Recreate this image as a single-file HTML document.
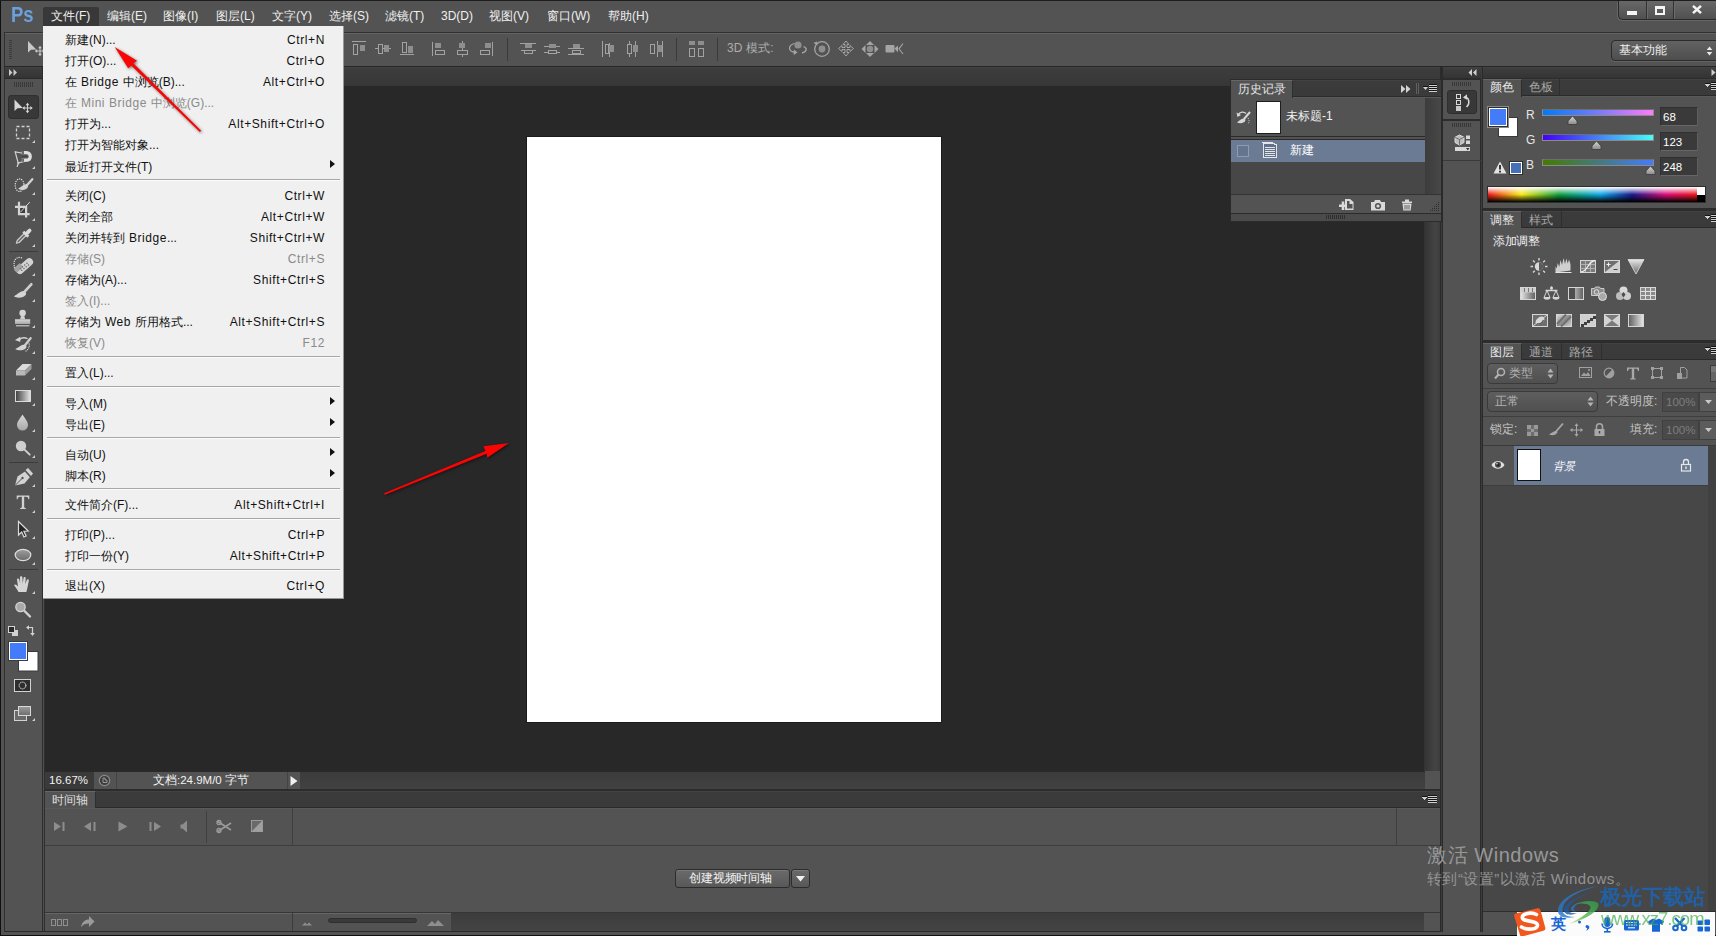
<!DOCTYPE html>
<html><head><meta charset="utf-8">
<style>
*{box-sizing:border-box;margin:0;padding:0}
html,body{width:1716px;height:936px;overflow:hidden;background:#535353;font-family:"Liberation Sans",sans-serif;font-size:12px;color:#e6e6e6}
.a{position:absolute}
.t{position:absolute;white-space:nowrap;line-height:14px}
svg{position:absolute;overflow:visible}
/* menu */
#menu{left:43px;top:26px;width:301px;height:573px;background:#f0f0f0;border-right:1px solid #979797;border-bottom:1px solid #979797;color:#000;font-size:12px}
#menu .i{position:absolute;left:22px;white-space:nowrap;line-height:14px;color:#111;margin-top:1px}
#menu .l{letter-spacing:.55px}
#menu .k{position:absolute;right:18px;white-space:nowrap;line-height:14px;color:#111;text-align:right;margin-top:1px;letter-spacing:.6px}
#menu .d{color:#8a8a8a}
#menu .s{position:absolute;left:4px;right:3px;height:2px;border-top:1px solid #a7a7a7;border-bottom:1px solid #fbfbfb}
#menu .r{position:absolute;left:287px;width:0;height:0;border-left:5px solid #111;border-top:4px solid transparent;border-bottom:4px solid transparent}
.tab{position:absolute;white-space:nowrap;line-height:14px;font-size:12px}
</style></head><body>

<!-- ===== window frame / base ===== -->
<div class="a" style="left:0;top:0;width:1716px;height:936px;background:#535353"></div>

<!-- canvas area -->
<div class="a" id="strip" style="left:44px;top:67px;width:1397px;height:19px;background:linear-gradient(#484848 0,#3d3d3d 1px,#373737 100%)"></div>
<div class="a" id="canvas" style="left:44px;top:86px;width:1397px;height:685px;background:#282828"></div>
<div class="a" id="vscroll" style="left:1424px;top:86px;width:16px;height:685px;background:linear-gradient(90deg,#333,#444 70%,#3c3c3c)"></div>
<div class="a" id="doc" style="left:527px;top:137px;width:414px;height:585px;background:#fff;box-shadow:0 0 0 1px #1b1b1b"></div>

<!-- SECTION: menubar -->
<div class="a" style="left:0;top:0;width:1px;height:936px;background:#101010"></div>
<div class="t" style="left:11px;top:3px;font-size:22px;line-height:24px;font-weight:bold;color:#6aa0db;transform:scaleX(.84);transform-origin:0 0">Ps</div>
<div class="a" style="left:43px;top:7px;width:56px;height:19px;background:#383838;border-radius:2px 2px 0 0"></div>
<div class="t" style="left:51px;top:9px;color:#f0f0f0">文件(F)</div>
<div class="t" style="left:107px;top:9px;color:#f0f0f0">编辑(E)</div>
<div class="t" style="left:163px;top:9px;color:#f0f0f0">图像(I)</div>
<div class="t" style="left:216px;top:9px;color:#f0f0f0">图层(L)</div>
<div class="t" style="left:272px;top:9px;color:#f0f0f0">文字(Y)</div>
<div class="t" style="left:329px;top:9px;color:#f0f0f0">选择(S)</div>
<div class="t" style="left:385px;top:9px;color:#f0f0f0">滤镜(T)</div>
<div class="t" style="left:441px;top:9px;color:#f0f0f0">3D(D)</div>
<div class="t" style="left:489px;top:9px;color:#f0f0f0">视图(V)</div>
<div class="t" style="left:547px;top:9px;color:#f0f0f0">窗口(W)</div>
<div class="t" style="left:608px;top:9px;color:#f0f0f0">帮助(H)</div>
<div class="a" style="left:1618px;top:1px;width:98px;height:19px;background:linear-gradient(#686868,#505050);border:1px solid #2a2a2a;border-top:0;border-right:0;border-radius:0 0 0 5px;box-shadow:-1px 1px 0 #666"></div>
<div class="a" style="left:1646px;top:1px;width:1px;height:18px;background:#323232"></div><div class="a" style="left:1647px;top:1px;width:1px;height:18px;background:#6a6a6a"></div>
<div class="a" style="left:1673px;top:1px;width:1px;height:18px;background:#323232"></div><div class="a" style="left:1674px;top:1px;width:1px;height:18px;background:#6a6a6a"></div>
<div class="a" style="left:1627px;top:11px;width:10px;height:4px;background:#f4f4f4"></div>
<div class="a" style="left:1655px;top:6px;width:10px;height:9px;border:2px solid #f4f4f4;border-top-width:3px"></div>
<svg style="left:1692px;top:5px" width="10" height="9" viewBox="0 0 10 9"><path d="M1 0.800 L9 8.200 M9 0.800 L1 8.200" stroke="#f4f4f4" stroke-width="2.500" fill="none"/></svg>
<div class="a" style="left:0;top:0;width:1716px;height:1px;background:#1e1e1e"></div>
<!-- SECTION: optionsbar -->
<div class="a" style="left:4px;top:32px;width:1712px;height:1px;background:#303030"></div>
<div class="a" style="left:4px;top:33px;width:1712px;height:1px;background:#636363"></div>
<div class="a" style="left:4px;top:66px;width:1712px;height:1px;background:#262626"></div>
<div class="a" style="left:4px;top:32px;width:1px;height:35px;background:#303030"></div>
<svg style="left:0;top:0" width="1716" height="67" viewBox="0 0 1716 67" fill="none" stroke="#a2a2a2" stroke-width="1" shape-rendering="crispEdges">
 <g fill="#8e8e8e" stroke="none">
  <rect x="360" y="45" width="5" height="6"/><rect x="384" y="45" width="5" height="7"/><rect x="408" y="46" width="5" height="7"/>
  <rect x="435" y="43" width="6" height="5"/><rect x="459" y="43" width="6" height="5"/><rect x="485" y="43" width="6" height="5"/>
  <rect x="525" y="44" width="7" height="4"/><rect x="549" y="44" width="7" height="4"/><rect x="573" y="44" width="7" height="4"/>
  <rect x="609" y="45" width="5" height="7"/><rect x="633" y="45" width="5" height="7"/><rect x="657" y="45" width="5" height="7"/>
  <rect x="689" y="41" width="6" height="4"/><rect x="698" y="41" width="6" height="4"/>
 </g>
 <!-- align top/vcenter/bottom -->
 <path d="M352 41.5H366 M353.5 44.5h4v10h-4z"/>
 <path d="M375 48.5h3 M383 48.5h2 M389 48.5h2 M378.5 44.5h4v9h-4z"/>
 <path d="M400 54.5H414 M402.5 42.5h4v10h-4z"/>
 <!-- align left/hcenter/right -->
 <path d="M432.5 42V56 M435.5 50.5h9v4h-9z"/>
 <path d="M462.5 41v2 M462.5 48v3 M462.5 55v2 M457.5 50.5h10v4h-10z"/>
 <path d="M492.5 42V56 M480.5 50.5h9v4h-9z"/>
 <path d="M507.5 38V61" stroke="#3a3a3a"/>
 <!-- distribute -->
 <path d="M520 43.5H536 M524.5 50.5h8v3h-8z M521 50.5h3 M533 50.5h3"/>
 <path d="M544 46.5h5 M556 46.5h4 M548.5 50.5h8v3h-8z M544 52.5h4 M557 52.5h3"/>
 <path d="M568 48.5H584 M572.5 50.5h8v3h-8z M568 54.5H584"/>
 <path d="M602.5 41V57 M605.5 44.5h3v9h-3z M609.5 43v2 M609.5 52v5"/>
 <path d="M629.5 41v3 M629.5 54v3 M627.5 44.5h4v9h-4z M635.5 41v4 M635.5 52v5"/>
 <path d="M650.5 44.5h4v9h-4z M657.5 41v4 M657.5 52v5 M662.5 41V57"/>
 <path d="M676.5 38V61" stroke="#3a3a3a"/>
 <path d="M689.5 48.5h5v8h-5z M698.5 48.5h5v8h-5z"/>
 <path d="M717.5 38V61" stroke="#3a3a3a"/>
</svg>
<div class="t" style="left:727px;top:41px;color:#adadad;letter-spacing:0.1px">3D 模式:</div>
<svg style="left:786px;top:38px" width="120" height="22" viewBox="786 38 120 22" fill="none" stroke="#a4a4a4" stroke-width="1.3">
 <!-- orbit -->
 <circle cx="798" cy="45" r="3.6" fill="#8e8e8e" stroke="none"/>
 <path d="M794.5 43.5c-7 2-6.500 8.500 1 8.700 M803.500 46.500c4 1.500 3.500 5.500-1.500 6.500" />
 <path d="M794 49.500l3.500 3-4 2.500z" fill="#a4a4a4" stroke="none"/>
 <!-- roll -->
 <circle cx="822" cy="49" r="7.300"/><circle cx="822" cy="49" r="3.400" fill="#8e8e8e" stroke="none"/>
 <path d="M813.500 43l3.500-1.500 0.500 4z" fill="#a4a4a4" stroke="none"/>
 <!-- pan -->
 <path d="M846 41l3 3.500h-2v3h3v-2l3.500 3-3.500 3v-2h-3v3h2l-3 3.500-3-3.500h2v-3h-3v2l-3.500-3 3.500-3v2h3v-3h-2z" stroke-width="1"/>
 <!-- slide -->
 <path d="M870 41l4 4h-8z M870 57l-4-4h8z M861.500 49l4-4v8z M878.500 49l-4-4v8z" fill="#a4a4a4" stroke="none"/>
 <circle cx="870" cy="49" r="3.200" fill="#8e8e8e" stroke="none"/>
 <!-- camera -->
 <rect x="885.500" y="45" width="9" height="7.500" rx="1" fill="#a4a4a4" stroke="none"/>
 <path d="M894.500 48.500l3.500-3v7z" fill="#a4a4a4" stroke="none"/>
 <path d="M903 43.500l-4 5.300 4 5.200" stroke-width="1.100"/>
</svg>
<!-- workspace switcher -->
<div class="a" style="left:1611px;top:40px;width:110px;height:21px;border:1px solid #2c2c2c;border-radius:4px;background:linear-gradient(#626262,#4e4e4e);box-shadow:0 1px 0 #646464"></div>
<div class="t" style="left:1619px;top:43px;color:#f0f0f0">基本功能</div>
<svg style="left:1706px;top:46px" width="7" height="10" viewBox="0 0 7 10"><path d="M3.500 0.500L6.300 4H0.700z M3.500 9.500L6.300 6H0.700z" fill="#eaeaea"/></svg>
<!-- left part of option bar (mostly hidden) -->
<svg style="left:8px;top:39px" width="36" height="22" viewBox="8 38 36 22" shape-rendering="crispEdges">
 <path d="M9 39.500h3M9 41.500h3M9 43.500h3M9 45.500h3M9 47.500h3M9 49.500h3M9 51.500h3M9 53.500h3M9 55.500h3M9 57.500h3" stroke="#3c3c3c"/>
</svg>
<svg style="left:26px;top:40px" width="18" height="16" viewBox="26 40 18 16"><path d="M28 41V52.500l3-2.700 5.300-.3z" fill="#c8c8c8"/><path d="M40 47.500v7M36.500 51h7" stroke="#c8c8c8" stroke-width="1.100"/><path d="M40 45.800l-1.900 2.400h3.800zM40 56.200l-1.900-2.400h3.800zM34.800 51l2.400-1.900v3.800zM45.200 51l-2.400-1.900v3.800z" fill="#c8c8c8"/></svg>

<!-- SECTION: toolbar -->
<div class="a" style="left:4px;top:67px;width:39px;height:12px;background:linear-gradient(#474747 0,#3e3e3e 1px,#343434 100%);border-bottom:1px solid #2a2a2a"></div>
<svg style="left:9px;top:69px" width="9" height="7" viewBox="0 0 9 7"><path d="M0 0l3.500 3.500L0 7zM4.500 0L8 3.500 4.500 7z" fill="#c9c9c9"/></svg>
<div class="a" style="left:4px;top:67px;width:1px;height:865px;background:#303030"></div>
<div class="a" style="left:42px;top:67px;width:1px;height:865px;background:#2e2e2e"></div><div class="a" style="left:43px;top:67px;width:1px;height:865px;background:#505050"></div><div class="a" style="left:44px;top:67px;width:1px;height:865px;background:#2e2e2e"></div>
<svg style="left:14px;top:82px" width="20" height="5" viewBox="0 0 20 5" shape-rendering="crispEdges"><path d="M0.500 0v5M2.500 0v5M4.500 0v5M6.500 0v5M8.500 0v5M10.500 0v5M12.500 0v5M14.500 0v5M16.500 0v5M18.500 0v5" stroke="#393939"/></svg>
<div class="a" style="left:8px;top:95px;width:31px;height:24px;background:#383838;border-radius:3px;border:1px solid #2f2f2f"></div>
<div class="a" style="left:9px;top:251px;width:29px;height:1px;background:#3c3c3c"></div>
<div class="a" style="left:9px;top:462px;width:29px;height:1px;background:#3c3c3c"></div>
<div class="a" style="left:9px;top:569px;width:29px;height:1px;background:#3c3c3c"></div>
<svg id="tools" style="left:0;top:90px" width="44" height="640" viewBox="0 90 44 640" fill="none" stroke="#d2d2d2" stroke-width="1.400" stroke-linejoin="round" stroke-linecap="round">
 <!-- corner triangles -->
 <g fill="#cfcfcf" stroke="none">
  <path d="M35 140v3h-3zM35 166v3h-3zM35 192v3h-3zM35 218v3h-3zM35 244v3h-3zM35 273v3h-3zM35 299v3h-3zM35 325v3h-3zM35 351v3h-3zM35 377v3h-3zM35 403v3h-3zM35 429v3h-3zM35 455v3h-3zM35 484v3h-3zM35 510v3h-3zM35 536v3h-3zM35 562v3h-3zM35 591v3h-3zM35 718v3h-3z"/>
 </g>
 <!-- move -->
 <path d="M14.500 99.500V111l3-2.700 5.300-.3z" fill="#d6d6d6" stroke="none"/>
 <path d="M27.500 104.500v7M24 108h7" stroke-width="1.100"/><path d="M27.500 102.800l-1.900 2.400h3.800zM27.500 113.200l-1.900-2.400h3.800zM22.300 108l2.400-1.900v3.800zM32.700 108l-2.400-1.900v3.800z" fill="#d6d6d6" stroke="none"/>
 <!-- marquee -->
 <rect x="16.500" y="126.500" width="13" height="12" stroke-dasharray="3 2" stroke-width="1.300" stroke-linecap="butt"/>
 <!-- lasso -->
 <path d="M15.200 151.800l3 11.200 12-3.200" stroke-width="1.200"/><path d="M15.200 151.800l6.500 1.200" stroke-width="1.200"/><path d="M18.500 163l-1.300 3.500" stroke-width="1.200"/><circle cx="18.300" cy="163" r="1.100" fill="#d2d2d2" stroke="none"/>
 <path d="M21.800 152.600h4.700a3.800 3.800 0 010 7.600h-4.700" stroke="#dedede" stroke-width="3.200" stroke-linecap="butt"/>
 <path d="M22 152.600h2M22 160.200h2" stroke="#6a6a6a" stroke-width="3.200" stroke-linecap="butt"/>
 <path d="M22.500 156.400h4" stroke="#444" stroke-width="1.300"/>
 <!-- quick select -->
 <ellipse cx="19.600" cy="185.200" rx="4.400" ry="6.300" stroke="#e4e4e4" stroke-dasharray="0.100 2.150" stroke-width="1.350"/>
 <path d="M32.300 179.200l-5.800 6.500" stroke-width="2.400" stroke="#d0d0d0"/><path d="M27 184.300c-2.500-.8-4.300 1.500-8.800 4.200 1.800 2 7 2.300 9.300-.7 1-1.300.8-2.600-.5-3.500z" fill="#d4d4d4" stroke="none"/>
 <!-- crop -->
 <rect x="20" y="207.800" width="5" height="5.200" fill="#3c3c3c" stroke="none"/>
 <path d="M19 201.800v12.300h10.600M15 206.800h11.100v10.700" stroke="#d4d4d4" stroke-width="2.200" stroke-linecap="butt" stroke-linejoin="miter"/><path d="M29.600 202.300l-9 9.700" stroke-width="1"/>
 <!-- eyedropper -->
 <path d="M16.300 243.300l.9-2.800 7.800-7.800 2 2-7.800 7.800z" stroke-width="1.100" fill="#6a6a6a"/>
 <path d="M27.300 232.800l2.300-2.300" stroke="#dadada" stroke-width="3.800" stroke-linecap="round"/>
 <path d="M23.300 231.700l5 5" stroke="#dadada" stroke-width="2.700" stroke-linecap="butt"/>
 <!-- heal -->
 <path d="M21.500 257.800c-6.500-1.800-9.500 4.500-6 13" stroke="#e4e4e4" stroke-dasharray="0.100 2.100" stroke-width="1.300"/>
 <rect x="14.500" y="262.300" width="20" height="7.600" rx="3.600" transform="rotate(-41 24.500 266)" fill="#d2d2d2" stroke="none"/>
 <path d="M17.300 272.300l6-5.200-3.500-4.200-4.500 4c-2 2.500.2 5.400 2 5.400z" fill="#a2a2a2" stroke="none"/>
 <g fill="#5e5e5e" stroke="none"><circle cx="22.500" cy="266.800" r=".7"/><circle cx="24.700" cy="265" r=".7"/><circle cx="24" cy="268.500" r=".7"/><circle cx="26.200" cy="266.700" r=".7"/><circle cx="27" cy="263.300" r=".7"/><circle cx="28.500" cy="265" r=".7"/><circle cx="20.300" cy="268.600" r=".7"/><circle cx="21.800" cy="270.300" r=".7"/></g>
 <!-- brush -->
 <path d="M31.300 284.300l-7.600 8.400" stroke="#cdcdcd" stroke-width="2.700"/><path d="M24.300 291.700c-3-1.500-5.300 1.600-10.300 4.600 3 2.400 9.800 1.800 11.800-1.600.8-1.300.3-2.200-1.500-3z" fill="#d4d4d4" stroke="none"/>
 <!-- stamp -->
 <circle cx="22.600" cy="313" r="3.250" fill="#d6d6d6" stroke="none"/><path d="M21.100 315.300h3l1 4h-5z" fill="#d0d0d0" stroke="none"/><path d="M15 319.200h15.200v4.700h-15.200z" fill="url(#gd)" stroke="none"/><path d="M16 325.800h13.400" stroke-width="1.100" stroke-linecap="butt"/>
 <!-- history brush -->
 <path d="M30.600 338.200l-6 7.600" stroke="#cdcdcd" stroke-width="2.400"/><path d="M25 345c-2.500-1.300-4.500 1-9.800 4 2.800 2.200 9 1.700 11-1.300.8-1.200.3-2-1.200-2.700z" fill="#d4d4d4" stroke="none"/>
 <path d="M19.500 339.500c2-2 5.500-2.300 7.500-1" stroke-width="1.400"/><path d="M15 340l5.300-3.300v5.300z" fill="#d6d6d6" stroke="none"/><path d="M26 351c2.500-1.500 3.800-4.500 3-7.500" stroke="#e4e4e4" stroke-dasharray="0.100 1.900" stroke-width="1.200"/>
 <!-- eraser -->
 <path d="M16 370.500l6.500-6.500h9l-6.500 6.500z" fill="#dcdcdc" stroke="none"/><path d="M16 370.500h9v5h-9z" fill="#b9b9b9" stroke="none"/><path d="M25 370.500l6.500-6.500v5l-6.500 6.500z" fill="#9d9d9d" stroke="none"/>
 <!-- gradient -->
 <defs><linearGradient id="gg" x1="0" x2="1"><stop offset="0" stop-color="#3e3e3e"/><stop offset="1" stop-color="#e6e6e6"/></linearGradient>
 <linearGradient id="gd" x1="0" y1="0" x2="0" y2="1"><stop offset="0" stop-color="#d8d8d8"/><stop offset="1" stop-color="#a8a8a8"/></linearGradient></defs>
 <rect x="15.500" y="390.500" width="15" height="11" fill="url(#gg)" stroke="#dadada" stroke-width="1" stroke-linejoin="miter"/>
 <!-- blur -->
 <path d="M22.500 414.500c2.500 4 5.500 7 5.500 10.500a5.500 5.500 0 01-11 0c0-3.500 3-6.500 5.500-10.500z" fill="url(#gd)" stroke="none"/>
 <!-- dodge -->
 <circle cx="21" cy="446" r="5.200" fill="#cfcfcf" stroke="none"/><path d="M24.800 449.800l4.900 4.900" stroke-width="1.900"/>
 <!-- pen -->
 <path d="M15 485.500l2.500-9 7.500-5 5 5.500-5.500 6.500z" fill="#d2d2d2" stroke="none"/><path d="M15 485.500l7-7" stroke="#555" stroke-width="1"/><circle cx="22.500" cy="478" r="1.200" fill="#555" stroke="none"/>
 <path d="M25.500 470l5.500 6 2-2.500-5-5.500z" fill="#d2d2d2" stroke="none"/><path d="M24.800 471l5.600 6" stroke="#555" stroke-width=".9"/>
 <!-- T -->
 <path transform="translate(23 495.600) scale(.9) translate(-23 -496)" d="M16 496h14v4h-1c-.3-2-1-2.800-3-2.800h-1.700v11c0 1.300.5 1.700 2 1.800v1h-6.600v-1c1.500-.1 2-.5 2-1.800v-11H20c-2 0-2.700.8-3 2.800h-1z" fill="#d2d2d2" stroke="none"/>
 <!-- path select -->
 <path d="M18.500 521.500v13.500l3.200-3 2.200 5 2.200-1-2.200-4.800 4.300-.2z" fill="#242424" stroke="#dcdcdc" stroke-width="1.200" stroke-linejoin="miter"/>
 <!-- ellipse -->
 <linearGradient id="ge" x1="0" y1="0" x2="0" y2="1"><stop offset="0" stop-color="#9c9c9c"/><stop offset="1" stop-color="#6c6c6c"/></linearGradient><ellipse cx="23" cy="555" rx="7.800" ry="5.600" fill="url(#ge)" stroke="#dcdcdc" stroke-width="1.200"/>
 <!-- hand -->
 <path d="M18.500 592c-1-2.500-3-4.500-4.500-7 1-1.200 2.500-.5 4 1.500l-1-7c0-1.500 2-1.500 2.300 0l.8 4-.1-6c0-1.600 2.200-1.600 2.400 0l.3 6 .8-5.500c.3-1.500 2.300-1.200 2.200.3l-.4 5.700 1.500-4c.5-1.400 2.400-.8 2 .7-.8 3.500-1 7-2.500 11.300z" fill="#d6d6d6" stroke="none"/>
 <!-- zoom -->
 <circle cx="20.500" cy="607" r="4.700" fill="#a9a9a9" stroke="#d6d6d6" stroke-width="1.300"/><path d="M24.500 611l5.500 5.500" stroke-width="2.400"/>
 <!-- default colors / swap -->
 <rect x="8.500" y="626.500" width="6" height="6" fill="#2a2a2a" stroke="#d2d2d2" stroke-width="1" stroke-linejoin="miter"/><rect x="12" y="630" width="6" height="6" fill="#d2d2d2" stroke="none"/><rect x="9" y="627" width="5" height="5" fill="#2a2a2a" stroke="none"/>
 <path d="M28 627.500h4.500v6" stroke-width="1.200" stroke-linejoin="miter" stroke-linecap="butt"/><path d="M26 627.500l3-2.300v4.600zM32.500 636l-2.300-3h4.600z" fill="#d2d2d2" stroke="none"/>
 <!-- bg/fg -->
 <rect x="19" y="652" width="19" height="19" fill="#fff" stroke="none"/><rect x="18.500" y="651.500" width="19.500" height="19.500" stroke="#3a3a3a" stroke-width="1" stroke-linejoin="miter"/>
 <rect x="8.500" y="641.500" width="19" height="19" fill="#447bf8" stroke="#3a3a3a" stroke-width="1" stroke-linejoin="miter"/><rect x="9.500" y="642.500" width="17" height="17" stroke="#fff" stroke-width="1" stroke-linejoin="miter"/>
 <!-- quick mask -->
 <rect x="14.500" y="679.500" width="16" height="12" fill="#2e2e2e" stroke="#d2d2d2" stroke-width="1" stroke-linejoin="miter"/><circle cx="22.500" cy="685.500" r="3.400" stroke-dasharray="1 1.200" stroke-width="1"/>
 <!-- screen mode -->
 <rect x="14.500" y="710.500" width="12" height="10" fill="#6a6a6a" stroke="#d2d2d2" stroke-width="1" stroke-linejoin="miter"/><rect x="18.500" y="706.500" width="12" height="9" fill="url(#ge)" stroke="#d8d8d8" stroke-width="1" stroke-linejoin="miter"/>
</svg>
<!-- SECTION: status -->
<div class="a" style="left:44px;top:771px;width:1397px;height:19px;background:linear-gradient(#3b3b3b,#424242)"></div>
<div class="a" style="left:44px;top:771px;width:1381px;height:1px;background:#2a2a2a"></div>
<div class="a" style="left:44px;top:772px;width:49px;height:17px;background:#3a3a3a"></div>
<div class="t" style="left:49px;top:773px;color:#f2f2f2;font-size:11.500px">16.67%</div>
<div class="a" style="left:93px;top:772px;width:207px;height:17px;background:#535353;border-left:1px solid #3a3a3a"></div>
<div class="a" style="left:116px;top:772px;width:1px;height:17px;background:#434343"></div>
<div class="a" style="left:287px;top:772px;width:1px;height:17px;background:#434343"></div>
<svg style="left:98px;top:774px" width="13" height="13" viewBox="0 0 13 13"><circle cx="6.500" cy="6.500" r="5.200" fill="#3b3b3b" stroke="#8a8a8a" stroke-width="1.200"/><path d="M5 4v4.500h4V6H7V4z" fill="none" stroke="#9a9a9a" stroke-width="1"/></svg>
<div class="t" style="left:153px;top:773px;color:#f2f2f2;font-size:11.500px">文档:24.9M/0 字节</div>
<svg style="left:290px;top:776px" width="8" height="10" viewBox="0 0 8 10"><path d="M0.500 0L7.500 5 0.500 10z" fill="#f0f0f0"/></svg>
<div class="a" style="left:1425px;top:771px;width:16px;height:19px;background:#535353"></div>
<div class="a" style="left:44px;top:789px;width:1397px;height:2px;background:#2c2c2c"></div>

<!-- SECTION: timeline -->
<div class="a" style="left:44px;top:791px;width:1397px;height:17px;background:linear-gradient(#484848 0,#3b3b3b 1px,#3a3a3a 100%);border-bottom:1px solid #2a2a2a"></div>
<div class="a" style="left:44px;top:791px;width:52px;height:17px;background:#535353;border-right:1px solid #2e2e2e;border-top:1px solid #666"></div>
<div class="t" style="left:52px;top:793px;color:#dcdcdc">时间轴</div>
<svg style="left:1422px;top:796px" width="15" height="7" viewBox="0 0 15 7" shape-rendering="crispEdges"><path d="M6 -0.500h9M6 1.500h9M6 3.500h9M6 5.500h9M0 0.500h5" stroke="#141414"/><path d="M0 1h5l-2.500 3z" fill="#d0d0d0"/><path d="M6 0.500h9M6 2.500h9M6 4.500h9M6 6.500h9" stroke="#d0d0d0"/></svg>
<div class="a" style="left:44px;top:808px;width:1397px;height:37px;background:#535353;border-top:1px solid #5a5a5a"></div>
<div class="a" style="left:44px;top:845px;width:1397px;height:1px;background:#3d3d3d"></div>
<div class="a" style="left:206px;top:811px;width:1px;height:32px;background:#3f3f3f"></div>
<div class="a" style="left:292px;top:808px;width:1px;height:37px;background:#3f3f3f"></div>
<div class="a" style="left:1396px;top:808px;width:1px;height:37px;background:#3f3f3f"></div>
<svg style="left:50px;top:818px" width="220" height="18" viewBox="50 818 220 18" fill="#8d8d8d" stroke="none">
 <path d="M54 822l7 4.500-7 4.500z"/><rect x="62.500" y="822" width="2" height="9"/>
 <path d="M91 822l-7 4.500 7 4.500z"/><rect x="93.500" y="822" width="2" height="9"/>
 <path d="M118.500 821.500l9 5-9 5z"/>
 <rect x="149.500" y="822" width="2" height="9"/><path d="M154 822l7 4.500-7 4.500z"/>
 <path d="M187 820.500v12l-4.500-4h-2v-4h2z"/>
 <path d="M217 821l14 9M217 832l14-9" stroke="#9a9a9a" stroke-width="1.600" fill="none"/><circle cx="219" cy="822.500" r="2" fill="none" stroke="#9a9a9a" stroke-width="1.300"/><circle cx="219" cy="830.500" r="2" fill="none" stroke="#9a9a9a" stroke-width="1.300"/>
 <rect x="251.500" y="820.500" width="11" height="11" fill="#6a6a6a" stroke="#9a9a9a" stroke-width="1"/><path d="M262 821v10.500h-10.500z" fill="#a0a0a0"/>
</svg>
<div class="a" style="left:675px;top:869px;width:115px;height:19px;border:1px solid #2c2c2c;border-radius:3px;background:linear-gradient(#6a6a6a,#585858);box-shadow:inset 0 1px 0 #7a7a7a"></div>
<div class="t" style="left:689px;top:871px;color:#f4f4f4;font-size:12px;letter-spacing:-.15px">创建视频时间轴</div>
<div class="a" style="left:791px;top:869px;width:19px;height:19px;border:1px solid #2c2c2c;border-radius:3px;background:linear-gradient(#6a6a6a,#585858);box-shadow:inset 0 1px 0 #7a7a7a"></div>
<svg style="left:796px;top:876px" width="9" height="6" viewBox="0 0 9 6"><path d="M0 0h9L4.500 5.500z" fill="#f2f2f2"/></svg>
<div class="a" style="left:44px;top:912px;width:1397px;height:1px;background:#363636"></div>
<div class="a" style="left:44px;top:913px;width:1397px;height:18px;background:#535353;border-top:1px solid #666"></div>
<div class="a" style="left:451px;top:913px;width:973px;height:18px;background:linear-gradient(#3c3c3c,#444)"></div>
<div class="a" style="left:1424px;top:913px;width:17px;height:18px;background:#535353"></div>
<div class="a" style="left:292px;top:913px;width:1px;height:18px;background:#3b3b3b"></div>
<svg style="left:50px;top:916px" width="400" height="14" viewBox="50 916 400 14" fill="none" stroke="#8f8f8f" stroke-width="1">
 <path d="M51.500 919.500h4v6h-4zM57.500 919.500h4v6h-4zM63.500 919.500h4v6h-4z" shape-rendering="crispEdges"/>
 <path d="M81 927c1-5 4-7.500 8-7.500v-3.500l5.500 5.500-5.500 5.500v-3.500c-3.500 0-6 1-8 3.500z" fill="#9a9a9a" stroke="none"/>
 <path d="M302 925.500l3-3 2 2 2-2 3 3z" fill="#8f8f8f" stroke="none"/>
 <rect x="328.500" y="918.500" width="88" height="4" rx="2" fill="#3a3a3a" stroke="#2e2e2e"/>
 <path d="M427 926l5-5 3 3 3-4 6 6z" fill="#8f8f8f" stroke="none"/>
</svg>
<div class="a" style="left:4px;top:931px;width:1712px;height:1px;background:#2a2a2a"></div>
<div class="a" style="left:1px;top:932px;width:1715px;height:3px;background:#535353"></div><div class="a" style="left:0;top:935px;width:1716px;height:1px;background:#101010"></div>

<div class="a" style="left:44px;top:67px;width:1px;height:865px;background:#2e2e2e"></div>
<!-- SECTION: history -->
<div class="a" style="left:1230px;top:79px;width:212px;height:143px;background:#2b2b2b"></div>
<div class="a" style="left:1231px;top:80px;width:210px;height:16px;background:linear-gradient(#484848 0,#3b3b3b 1px,#3a3a3a 100%)"></div><div class="a" style="left:1231px;top:97px;width:210px;height:1px;background:#5a5a5a"></div>
<div class="a" style="left:1231px;top:80px;width:62px;height:18px;background:#535353;border-right:1px solid #2e2e2e;border-top:1px solid #666"></div>
<div class="t" style="left:1238px;top:82px;color:#e4e4e4">历史记录</div>
<svg style="left:1400px;top:84px" width="40" height="10" viewBox="1400 84 40 10"><path d="M1401 85l4.500 4-4.500 4zM1406 85l4.500 4-4.500 4z" fill="#d4d4d4"/><path d="M1416.500 83v11M1418.500 83v11" stroke="#606060" stroke-width="1" shape-rendering="crispEdges"/><path d="M1429 84.500h8M1429 86.500h8M1429 88.500h8M1429 90.500h8M1423 86.500h5" stroke="#141414" shape-rendering="crispEdges"/><path d="M1423 87h5l-2.500 3z" fill="#d0d0d0"/><path d="M1429 85.500h8M1429 87.500h8M1429 89.500h8M1429 91.500h8" stroke="#d0d0d0" shape-rendering="crispEdges"/></svg>
<div class="a" style="left:1231px;top:98px;width:194px;height:38px;background:#535353"></div>
<div class="a" style="left:1231px;top:137px;width:194px;height:2px;background:#535353"></div>
<div class="a" style="left:1425px;top:98px;width:16px;height:97px;background:linear-gradient(90deg,#3c3c3c,#484848)"></div>
<div class="a" style="left:1256px;top:101px;width:25px;height:33px;background:#fff;border:1px solid #1e1e1e"></div>
<svg style="left:1236px;top:110px" width="16" height="16" viewBox="0 0 16 16" fill="none" stroke="#d8d8d8"><path d="M14 2l-6 7" stroke-width="2"/><path d="M8.500 8.500c-2-.5-4 1-7.500 4 3.500 1.500 8 .5 8.500-2.500z" fill="#d8d8d8" stroke="none"/><path d="M2 5c2-3.500 6-3.500 8-1.500" stroke-width="1.300"/><path d="M0.500 2.500l1 4.500 3.500-2z" fill="#d8d8d8" stroke="none"/><path d="M12 8c1.500 2 1.500 4 0 6" stroke-dasharray="1 1.300" stroke-width="1"/></svg>
<div class="t" style="left:1286px;top:109px;color:#f2f2f2">未标题-1</div>
<div class="a" style="left:1231px;top:140px;width:194px;height:22px;background:#6b7b94"></div>
<div class="a" style="left:1237px;top:145px;width:12px;height:12px;border:1px solid #8e9bb0;background:#65758e"></div>
<svg style="left:1262px;top:142px" width="16" height="17" viewBox="0 0 16 17" shape-rendering="crispEdges"><path d="M1.500 1.500h9l4 1v13h-13z" fill="#62718a" stroke="#e6e6e6"/><path d="M0 0.500h11" stroke="#e6e6e6"/><path d="M3 5.500h10M3 7.500h10M3 9.500h10M3 11.500h10M3 13.500h10" stroke="#e6e6e6"/></svg>
<div class="t" style="left:1290px;top:143px;color:#fff">新建</div>
<div class="a" style="left:1231px;top:162px;width:194px;height:32px;background:#474747"></div>
<div class="a" style="left:1231px;top:194px;width:210px;height:1px;background:#333"></div>
<div class="a" style="left:1231px;top:195px;width:210px;height:18px;background:#535353"></div>
<svg style="left:1338px;top:198px" width="104" height="14" viewBox="1338 198 104 14" fill="#dadada" stroke="none">
 <path d="M1345 199h5l3.500 3v8h-8.500z"/><path d="M1347 201h2.500v3h3v4.500h-5.500z" fill="#535353"/><path d="M1339 204.500h8v2.500h-8zM1341.700 201.500h2.600v8.500h-2.600z"/>
 <path d="M1371 202h3l1-2h5l1 2h4v8.500h-14z"/><circle cx="1378" cy="206" r="3.100" fill="#535353"/><circle cx="1378" cy="206" r="1.600"/>
 <path d="M1402 201.500h10v1.500h-10zM1405 199.500h4v2h-4zM1402.500 203.500h9l-.8 7h-7.400z"/><path d="M1405 205v4.500M1407 205v4.500M1409 205v4.500" stroke="#535353" stroke-width=".9"/>
 <g fill="#2e2e2e"><rect x="1438" y="202" width="1" height="1"/><rect x="1436" y="204" width="1" height="1"/><rect x="1438" y="204" width="1" height="1"/><rect x="1434" y="206" width="1" height="1"/><rect x="1436" y="206" width="1" height="1"/><rect x="1438" y="206" width="1" height="1"/><rect x="1432" y="208" width="1" height="1"/><rect x="1434" y="208" width="1" height="1"/><rect x="1436" y="208" width="1" height="1"/><rect x="1438" y="208" width="1" height="1"/><rect x="1430" y="210" width="1" height="1"/><rect x="1432" y="210" width="1" height="1"/><rect x="1434" y="210" width="1" height="1"/><rect x="1436" y="210" width="1" height="1"/><rect x="1438" y="210" width="1" height="1"/></g>
</svg>
<div class="a" style="left:1231px;top:214px;width:210px;height:7px;background:#4b4b4b"></div>
<svg style="left:1326px;top:215px" width="20" height="5" viewBox="0 0 20 5" shape-rendering="crispEdges"><path d="M0.500 0v4M2.500 0v4M4.500 0v4M6.500 0v4M8.500 0v4M10.500 0v4M12.500 0v4M14.500 0v4M16.500 0v4M18.500 0v4" stroke="#2f2f2f"/></svg>

<!-- SECTION: dock -->
<div class="a" style="left:1441px;top:67px;width:2px;height:865px;background:#2a2a2a"></div><div class="a" style="left:1440px;top:67px;width:1px;height:12px;background:#2a2a2a"></div><div class="a" style="left:1440px;top:222px;width:1px;height:710px;background:#2a2a2a"></div><div class="a" style="left:1441px;top:222px;width:1px;height:710px;background:#3c3c3c"></div>
<div class="a" style="left:1443px;top:67px;width:37px;height:865px;background:#535353"></div>
<div class="a" style="left:1480px;top:67px;width:3px;height:865px;background:#2a2a2a"></div><div class="a" style="left:1481px;top:67px;width:1px;height:865px;background:#3c3c3c"></div>
<div class="a" style="left:1443px;top:67px;width:38px;height:11px;background:linear-gradient(#474747 0,#3e3e3e 1px,#343434 100%)"></div>
<div class="a" style="left:1443px;top:78px;width:38px;height:2px;background:#2c2c2c"></div>
<svg style="left:1468px;top:69px" width="9" height="7" viewBox="0 0 9 7"><path d="M4 0L0.500 3.500 4 7zM8.500 0L5 3.500 8.500 7z" fill="#d0d0d0"/></svg>
<svg style="left:1452px;top:82px" width="20" height="5" viewBox="0 0 20 5" shape-rendering="crispEdges"><path d="M0.500 0v4M2.500 0v4M4.500 0v4M6.500 0v4M8.500 0v4M10.500 0v4M12.500 0v4M14.500 0v4M16.500 0v4M18.500 0v4" stroke="#383838"/></svg>
<div class="a" style="left:1447px;top:90px;width:30px;height:24px;background:#383838;border:1px solid #2e2e2e;border-radius:3px"></div>
<svg style="left:1455px;top:93px" width="16" height="18" viewBox="0 0 16 18" fill="none" stroke="#d8d8d8" stroke-width="1"><path d="M1.500 1.500h4v4h-4zM1.500 7.500h4v4h-4z" shape-rendering="crispEdges"/><rect x="1" y="13" width="5" height="5" fill="#c8c8c8" stroke="none"/><path d="M9 4.500c5-1.500 6.500 6 2.500 9.500" stroke-width="1.600"/><path d="M8 4.500l4-3.200v5.500z" fill="#d8d8d8" stroke="none"/></svg>
<div class="a" style="left:1443px;top:119px;width:38px;height:2px;background:#2c2c2c"></div>
<svg style="left:1452px;top:123px" width="20" height="5" viewBox="0 0 20 5" shape-rendering="crispEdges"><path d="M0.500 0v4M2.500 0v4M4.500 0v4M6.500 0v4M8.500 0v4M10.500 0v4M12.500 0v4M14.500 0v4M16.500 0v4M18.500 0v4" stroke="#383838"/></svg>
<svg style="left:1454px;top:134px" width="17" height="18" viewBox="0 0 17 18" fill="none" stroke="#d8d8d8"><path d="M5.500 1l4.500 2.200v5.300l-4.500 2.500-4.500-2.500v-5.300z" fill="#bdbdbd" stroke="#e2e2e2" stroke-width=".9"/><path d="M1 3.200l4.500 2.300 4.500-2.300M5.500 5.500v5.500" stroke="#666" stroke-width=".9"/><rect x="12" y="1.500" width="4" height="3.500" fill="#d8d8d8" stroke="none"/><rect x="12" y="6.500" width="4" height="3.500" fill="#d8d8d8" stroke="none"/><rect x="1" y="13" width="15" height="4" fill="#d8d8d8" stroke="none"/><path d="M12 14h3.500l-1.700 2.500z" fill="#333" stroke="none"/></svg>
<div class="a" style="left:1443px;top:160px;width:38px;height:1px;background:#3a3a3a"></div>
<!-- SECTION: rightpanels -->
<div class="a" style="left:1483px;top:67px;width:233px;height:11px;background:linear-gradient(#474747 0,#3e3e3e 1px,#343434 100%)"></div>
<svg style="left:1711px;top:69px" width="5" height="7" viewBox="0 0 5 7"><path d="M0.500 0L4.500 3.500 0.500 7z" fill="#d0d0d0"/></svg>
<div class="a" style="left:1483px;top:78px;width:233px;height:1px;background:#2c2c2c"></div>
<!-- color panel -->
<div class="a" style="left:1483px;top:79px;width:233px;height:17px;background:linear-gradient(#484848 0,#3b3b3b 1px,#3a3a3a 100%);border-bottom:1px solid #2a2a2a"></div><div class="a" style="left:1483px;top:96px;width:233px;height:1px;background:#5a5a5a"></div>
<div class="a" style="left:1483px;top:79px;width:39px;height:18px;background:#535353;border-right:1px solid #2e2e2e;border-top:1px solid #666"></div>
<div class="a" style="left:1559px;top:79px;width:1px;height:16px;background:#2e2e2e"></div>
<div class="t" style="left:1490px;top:80px;color:#e8e8e8">颜色</div>
<div class="t" style="left:1529px;top:80px;color:#a8a8a8">色板</div>
<svg style="left:1705px;top:83px" width="11" height="7" viewBox="0 0 11 7" shape-rendering="crispEdges"><path d="M6 -0.500h5M6 1.500h5M6 3.500h5M6 5.500h5M0 0.500h5" stroke="#141414"/><path d="M0 1h5l-2.500 3z" fill="#d0d0d0"/><path d="M6 0.500h5M6 2.500h5M6 4.500h5M6 6.500h5" stroke="#d0d0d0"/></svg>
<div class="a" style="left:1483px;top:97px;width:233px;height:111px;background:#535353"></div>
<div class="a" style="left:1498px;top:117px;width:20px;height:20px;background:#fff;border:1px solid #3a3a3a"></div>
<div class="a" style="left:1487px;top:106px;width:22px;height:22px;background:#447bf8;border:1px solid #8c8c8c;box-shadow:inset 0 0 0 1px #2e2e2e,inset 0 0 0 2px #fff"></div>
<div class="t" style="left:1526px;top:108px;color:#e6e6e6">R</div>
<div class="t" style="left:1526px;top:133px;color:#e6e6e6">G</div>
<div class="t" style="left:1526px;top:158px;color:#e6e6e6">B</div>
<div class="a" style="left:1542px;top:109px;width:112px;height:7px;border:1px solid #8a8a8a;border-top-color:#6e6e6e;background:linear-gradient(90deg,#007bf8,#6a7bf8 45%,#ff7bf8)"></div>
<div class="a" style="left:1542px;top:134px;width:112px;height:7px;border:1px solid #8a8a8a;border-top-color:#6e6e6e;background:linear-gradient(90deg,#4400f8,#447bf8 48%,#44fff8)"></div>
<div class="a" style="left:1542px;top:159px;width:112px;height:7px;border:1px solid #8a8a8a;border-top-color:#6e6e6e;background:linear-gradient(90deg,#447b00,#447b80 52%,#447bff)"></div>
<svg style="left:1567px;top:115px" width="90" height="62" viewBox="1567 115 90 62"><defs><linearGradient id="th" x1="0" y1="0" x2="0" y2="1"><stop offset="0" stop-color="#d8d8d8"/><stop offset="1" stop-color="#8a8a8a"/></linearGradient></defs>
<path d="M1572.500 116l4.500 5v3.500h-9v-3.500z" fill="url(#th)" stroke="#3c3c3c" stroke-width=".8"/>
<path d="M1596.500 141l4.500 5v3.500h-9v-3.500z" fill="url(#th)" stroke="#3c3c3c" stroke-width=".8"/>
<path d="M1650.500 166l4.500 5v3.500h-9v-3.500z" fill="url(#th)" stroke="#3c3c3c" stroke-width=".8"/></svg>
<div class="a" style="left:1660px;top:107px;width:38px;height:19px;background:#3a3a3a;border:1px solid #303030;border-bottom-color:#666;border-right-color:#5e5e5e"></div>
<div class="a" style="left:1660px;top:132px;width:38px;height:19px;background:#3a3a3a;border:1px solid #303030;border-bottom-color:#666;border-right-color:#5e5e5e"></div>
<div class="a" style="left:1660px;top:157px;width:38px;height:19px;background:#3a3a3a;border:1px solid #303030;border-bottom-color:#666;border-right-color:#5e5e5e"></div>
<div class="t" style="left:1663px;top:110px;color:#fff;font-size:11.500px">68</div>
<div class="t" style="left:1663px;top:135px;color:#fff;font-size:11.500px">123</div>
<div class="t" style="left:1663px;top:160px;color:#fff;font-size:11.500px">248</div>
<svg style="left:1493px;top:161px" width="14" height="13" viewBox="0 0 14 13"><path d="M7 0.500L13.500 12.500H0.500z" fill="#e4e4e4"/><path d="M7 4v4.500" stroke="#222" stroke-width="1.800"/><rect x="6.100" y="9.700" width="1.800" height="1.800" fill="#222"/></svg>
<div class="a" style="left:1509px;top:161px;width:14px;height:14px;background:#4670b8;border:1px solid #2e2e2e;box-shadow:inset 0 0 0 1px #fff"></div>
<div class="a" style="left:1487px;top:186px;width:219px;height:17px;background:#2e2e2e"></div>
<div class="a" style="left:1488px;top:187px;width:209px;height:15px;background:linear-gradient(180deg,#fff 0%,rgba(255,255,255,0) 50%,rgba(0,0,0,0) 50%,#000 100%),linear-gradient(90deg,#ee1c1c 0%,#f8ea18 16%,#12a23e 34%,#10aaea 54%,#1c1c90 69%,#dc107c 85%,#ee1c1c 100%)"></div>
<div class="a" style="left:1697px;top:187px;width:8px;height:8px;background:#fff"></div>
<div class="a" style="left:1697px;top:195px;width:8px;height:7px;background:#000"></div>
<div class="a" style="left:1483px;top:208px;width:233px;height:3px;background:#2c2c2c"></div>
<!-- adjustments panel -->
<div class="a" style="left:1483px;top:211px;width:233px;height:17px;background:linear-gradient(#484848 0,#3b3b3b 1px,#3a3a3a 100%);border-bottom:1px solid #2a2a2a"></div><div class="a" style="left:1483px;top:228px;width:233px;height:1px;background:#5a5a5a"></div>
<div class="a" style="left:1483px;top:211px;width:39px;height:18px;background:#535353;border-right:1px solid #2e2e2e;border-top:1px solid #666"></div>
<div class="a" style="left:1561px;top:211px;width:1px;height:16px;background:#2e2e2e"></div>
<div class="t" style="left:1490px;top:213px;color:#e8e8e8">调整</div>
<div class="t" style="left:1529px;top:213px;color:#a8a8a8">样式</div>
<svg style="left:1705px;top:215px" width="11" height="7" viewBox="0 0 11 7" shape-rendering="crispEdges"><path d="M6 -0.500h5M6 1.500h5M6 3.500h5M6 5.500h5M0 0.500h5" stroke="#141414"/><path d="M0 1h5l-2.500 3z" fill="#d0d0d0"/><path d="M6 0.500h5M6 2.500h5M6 4.500h5M6 6.500h5" stroke="#d0d0d0"/></svg>
<div class="a" style="left:1483px;top:228px;width:233px;height:112px;background:#535353"></div>
<div class="t" style="left:1493px;top:234px;color:#f0f0f0;letter-spacing:-.5px">添加调整</div>
<svg style="left:1519px;top:256px" width="140" height="74" viewBox="1519 256 140 74" fill="none" stroke="#d6d6d6" stroke-width="1">
<defs>
<linearGradient id="a1" x1="0" x2="1"><stop offset="0" stop-color="#e8e8e8"/><stop offset="1" stop-color="#5e5e5e"/></linearGradient>
<linearGradient id="a2" x1="0" y1="0" x2="0" y2="1"><stop offset="0" stop-color="#e8e8e8"/><stop offset="1" stop-color="#6a6a6a"/></linearGradient>
<linearGradient id="a3" x1="0" y1="0" x2="1" y2="1"><stop offset="0" stop-color="#e0e0e0"/><stop offset=".5" stop-color="#8a8a8a"/><stop offset="1" stop-color="#d0d0d0"/></linearGradient>
</defs>
<!-- row1 -->
<circle cx="1539" cy="266.500" r="4.200" fill="#d8d8d8" stroke="none"/><path d="M1539 262.300a4.200 4.200 0 010 8.400z" fill="#5a5a5a" stroke="none"/>
<path d="M1539 258v2.500M1539 272.500v2.500M1530.500 266.500h2.500M1545 266.500h2.500M1533 260.500l1.800 1.800M1543.200 270.700l1.800 1.800M1545 260.500l-1.800 1.800M1534.800 270.700l-1.800 1.800" stroke-width="1.400"/>
<path d="M1555.500 272.500v-6l1.200 2 1-5.500 1.500 4 1.300-7 1.500 5 1.500-7 1.500 6 1.300-5.500 1.500 5 1.200-4 1 3 .5 2v6z" fill="#cfcfcf" stroke="none"/><path d="M1555.500 272.500h16" stroke="#e4e4e4" stroke-width="1"/>
<rect x="1580.500" y="260.500" width="15" height="12" fill="#7a7a7a" shape-rendering="crispEdges"/><path d="M1585.500 260.500v12M1590.500 260.500v12M1580.500 264.500h15M1580.500 268.500h15" stroke="#bdbdbd" stroke-width=".8"/><path d="M1581 272c7-.5 7-11 14-11.500" stroke="#f0f0f0" stroke-width="1.300"/>
<rect x="1604.500" y="260.500" width="15" height="12" fill="#6e6e6e" shape-rendering="crispEdges"/><path d="M1619 261l-14 11h14z" fill="#cfcfcf" stroke="none"/><path d="M1606.500 264.500h4M1608.500 262.500v4" stroke="#f0f0f0"/><path d="M1613.500 269.500h4" stroke="#444"/>
<path d="M1628 259.500h16l-8 14.500z" fill="url(#a2)" stroke="#e0e0e0" stroke-width=".8"/>
<!-- row2 -->
<rect x="1520.500" y="287.500" width="15" height="12" fill="url(#a1)" shape-rendering="crispEdges"/><rect x="1521" y="288" width="14" height="4.500" fill="#cfcfcf" stroke="none"/><path d="M1524.500 288v4M1528.500 288v4M1532.500 288v4" stroke="#777" stroke-width="1"/>
<path d="M1551.500 286.500v3M1545.500 290.500h12" stroke-width="1.300"/><path d="M1547 290.500l-3 7h6zM1556 290.500l-3 7h6z" stroke-width="1" fill="none"/><path d="M1543.500 297.500h7c0 3-7 3-7 0zM1552.500 297.500h7c0 3-7 3-7 0z" fill="#d6d6d6" stroke="none"/><circle cx="1551.500" cy="288" r="1.600" fill="#d6d6d6" stroke="none"/>
<rect x="1568.500" y="287.500" width="15" height="12" fill="url(#a1)" shape-rendering="crispEdges"/><rect x="1569" y="288" width="6" height="11" fill="#4e4e4e" stroke="none"/>
<path d="M1591.500 288.500h3l1-1.500h4l1 1.500h3.500v7h-12.500z" fill="#8a8a8a" stroke="#d6d6d6" stroke-width=".9"/><circle cx="1596.500" cy="292" r="2.300" fill="none" stroke="#e6e6e6" stroke-width=".9"/><circle cx="1602.500" cy="296.500" r="4" fill="#a9a9a9" stroke="#e0e0e0" stroke-width="1"/>
<circle cx="1623.500" cy="290.500" r="4" fill="#d9d9d9" stroke="none"/><circle cx="1620" cy="296" r="4" fill="#bdbdbd" stroke="none"/><circle cx="1627" cy="296" r="4" fill="#cdcdcd" stroke="none"/><path d="M1623.500 292l-2 2.500 2 3 2-3z" fill="#4a4a4a" stroke="none"/>
<rect x="1640.500" y="287.500" width="15" height="12" fill="#8a8a8a" shape-rendering="crispEdges"/><path d="M1645.500 287.500v12M1650.500 287.500v12M1640.500 291.500h15M1640.500 295.500h15" stroke="#e0e0e0" stroke-width="1" shape-rendering="crispEdges"/>
<!-- row3 -->
<rect x="1532.500" y="314.500" width="15" height="12" fill="#6e6e6e" shape-rendering="crispEdges"/><ellipse cx="1540" cy="320.500" rx="5" ry="3.200" transform="rotate(-35 1540 320.500)" fill="#d8d8d8" stroke="none"/><path d="M1533 326l14-11" stroke="#d8d8d8" stroke-width="1"/><path d="M1537 323.500c2 1 5 0 6.500-3.500" stroke="#555" stroke-width="1.200"/>
<rect x="1556.500" y="314.500" width="15" height="12" fill="url(#a3)" shape-rendering="crispEdges"/><path d="M1557 324l9-9.500M1561 326.500l10-10" stroke="#707070" stroke-width="2"/>
<rect x="1580.500" y="314.500" width="15" height="12" fill="#cfcfcf" shape-rendering="crispEdges"/><path d="M1581 324h3v-2h3v-2h3v-2h3v-2h2.500v3h-3v2h-3v2h-3v2h-3v2h-2.500z" fill="#3e3e3e" stroke="none" shape-rendering="crispEdges"/>
<rect x="1604.500" y="314.500" width="15" height="12" fill="#7a7a7a" shape-rendering="crispEdges"/><path d="M1605 315l7 5.500-7 5.500zM1619 315l-7 5.500 7 5.500z" fill="#d2d2d2" stroke="none"/>
<rect x="1628.500" y="314.500" width="15" height="12" fill="url(#a1)" transform="rotate(180 1636 320.500)" shape-rendering="crispEdges"/>
</svg>
<div class="a" style="left:1483px;top:340px;width:233px;height:3px;background:#2c2c2c"></div>
<!-- layers panel -->
<div class="a" style="left:1483px;top:343px;width:233px;height:17px;background:linear-gradient(#484848 0,#3b3b3b 1px,#3a3a3a 100%);border-bottom:1px solid #2a2a2a"></div><div class="a" style="left:1483px;top:360px;width:233px;height:1px;background:#5a5a5a"></div>
<div class="a" style="left:1483px;top:343px;width:39px;height:18px;background:#535353;border-right:1px solid #2e2e2e;border-top:1px solid #666"></div>
<div class="a" style="left:1561px;top:343px;width:1px;height:16px;background:#2e2e2e"></div>
<div class="a" style="left:1601px;top:343px;width:1px;height:16px;background:#2e2e2e"></div>
<div class="t" style="left:1490px;top:345px;color:#e8e8e8">图层</div>
<div class="t" style="left:1529px;top:345px;color:#a8a8a8">通道</div>
<div class="t" style="left:1569px;top:345px;color:#a8a8a8">路径</div>
<svg style="left:1705px;top:347px" width="11" height="7" viewBox="0 0 11 7" shape-rendering="crispEdges"><path d="M6 -0.500h5M6 1.500h5M6 3.500h5M6 5.500h5M0 0.500h5" stroke="#141414"/><path d="M0 1h5l-2.500 3z" fill="#d0d0d0"/><path d="M6 0.500h5M6 2.500h5M6 4.500h5M6 6.500h5" stroke="#d0d0d0"/></svg>
<div class="a" style="left:1483px;top:360px;width:233px;height:86px;background:#535353"></div>
<div class="a" style="left:1483px;top:388px;width:233px;height:1px;background:#3e3e3e"></div>
<div class="a" style="left:1483px;top:416px;width:233px;height:1px;background:#3e3e3e"></div>
<div class="a" style="left:1483px;top:445px;width:233px;height:1px;background:#3a3a3a"></div>
<div class="a" style="left:1487px;top:363px;width:71px;height:21px;border:1px solid #3a3a3a;border-radius:4px;background:linear-gradient(#5e5e5e,#505050)"></div>
<svg style="left:1494px;top:367px" width="12" height="13" viewBox="0 0 12 13"><circle cx="7" cy="5" r="3.500" fill="none" stroke="#b4b4b4" stroke-width="1.500"/><path d="M4.500 7.500L1 11.500" stroke="#b4b4b4" stroke-width="2"/></svg>
<div class="t" style="left:1509px;top:366px;color:#b4b4b4">类型</div>
<svg style="left:1547px;top:368px" width="7" height="11" viewBox="0 0 7 11"><path d="M3.500 0.500L6.500 4.500H0.500zM3.500 10.500L6.500 6.500H0.500z" fill="#b4b4b4"/></svg>
<svg style="left:1578px;top:364px" width="140" height="20" viewBox="1578 364 140 20" fill="none" stroke="#a0a0a0" stroke-width="1">
 <rect x="1579.500" y="367.500" width="12" height="10" shape-rendering="crispEdges"/><path d="M1581 376l3-3.500 2 2 2-2.500 2.500 4z" fill="#a0a0a0" stroke="none"/><circle cx="1589" cy="370" r="1" fill="#a0a0a0" stroke="none"/>
 <circle cx="1609" cy="373" r="4.800" stroke-width="1.200"/><path d="M1605.600 376.400a4.800 4.800 0 006.800-6.800z" fill="#a0a0a0" stroke="none"/>
 <path d="M1627 367.500h12v3.500h-1c-.3-1.700-.8-2.300-2.500-2.300h-1.300v8.500c0 1 .4 1.300 1.600 1.400v.9h-5.600v-.9c1.200-.1 1.600-.4 1.600-1.400v-8.500h-1.300c-1.700 0-2.200.6-2.500 2.300h-1z" fill="#a8a8a8" stroke="none"/>
 <rect x="1652.500" y="368.500" width="9" height="9" shape-rendering="crispEdges"/><g fill="#a0a0a0" stroke="none"><rect x="1651" y="367" width="3" height="3"/><rect x="1660" y="367" width="3" height="3"/><rect x="1651" y="376" width="3" height="3"/><rect x="1660" y="376" width="3" height="3"/></g>
 <path d="M1680.500 367.500h4l2.500 2.500v8h-6.500z" stroke-width="1"/><rect x="1677" y="373" width="5" height="6" fill="#a0a0a0" stroke="none"/>
 <rect x="1710.500" y="365.500" width="8" height="16" fill="#666" stroke="#3a3a3a"/><rect x="1711" y="366" width="7" height="6" fill="#777" stroke="none"/>
</svg>
<div class="a" style="left:1487px;top:391px;width:111px;height:21px;border:1px solid #3a3a3a;border-radius:4px;background:linear-gradient(#5e5e5e,#505050)"></div>
<div class="t" style="left:1495px;top:394px;color:#b4b4b4">正常</div>
<svg style="left:1587px;top:396px" width="7" height="11" viewBox="0 0 7 11"><path d="M3.500 0.500L6.500 4.500H0.500zM3.500 10.500L6.500 6.500H0.500z" fill="#b4b4b4"/></svg>
<div class="t" style="left:1606px;top:394px;color:#c4c4c4">不透明度:</div>
<div class="a" style="left:1662px;top:392px;width:37px;height:20px;background:#4a4a4a;border:1px solid #404040"></div>
<div class="t" style="left:1666px;top:395px;color:#7d7d7d;font-size:11.500px">100%</div>
<div class="a" style="left:1699px;top:392px;width:17px;height:20px;background:#5c5c5c;border:1px solid #404040;border-right:0"></div>
<svg style="left:1705px;top:400px" width="7" height="4" viewBox="0 0 7 4"><path d="M0 0h7L3.500 4z" fill="#c8c8c8"/></svg>
<div class="t" style="left:1490px;top:422px;color:#c4c4c4">锁定:</div>
<svg style="left:1526px;top:422px" width="82" height="16" viewBox="1526 422 82 16" fill="none" stroke="#a8a8a8">
 <g shape-rendering="crispEdges" stroke="none"><rect x="1527" y="424.500" width="11" height="11" fill="#6e6e6e"/><rect x="1527" y="424.500" width="4" height="4" fill="#999"/><rect x="1534" y="424.500" width="4" height="4" fill="#999"/><rect x="1531" y="428.500" width="3" height="3" fill="#999"/><rect x="1527" y="431.500" width="4" height="4" fill="#999"/><rect x="1534" y="431.500" width="4" height="4" fill="#999"/></g>
 <path d="M1563 423.500l-7 8" stroke-width="1.800"/><path d="M1556.500 431c-2-.5-3.500 1-7.500 3.500 3.500 1.500 8 .5 8.500-2.500z" fill="#a8a8a8" stroke="none"/>
 <path d="M1576.500 425v10M1571.500 430h10" stroke-width="1.100"/><path d="M1576.500 423.300l-2 2.700h4zM1576.500 436.700l-2-2.700h4zM1569.800 430l2.700-2v4zM1583.200 430l-2.700-2v4z" fill="#a8a8a8" stroke="none"/>
 <rect x="1594.500" y="429" width="10" height="7" fill="#a8a8a8" stroke="none"/><path d="M1596.500 429v-2.200a3 3 0 016 0v2.200" stroke-width="1.500"/><rect x="1598.800" y="431" width="1.400" height="2.500" fill="#444" stroke="none"/>
</svg>
<div class="t" style="left:1630px;top:422px;color:#c4c4c4">填充:</div>
<div class="a" style="left:1662px;top:420px;width:37px;height:20px;background:#4a4a4a;border:1px solid #404040"></div>
<div class="t" style="left:1666px;top:423px;color:#7d7d7d;font-size:11.500px">100%</div>
<div class="a" style="left:1699px;top:420px;width:17px;height:20px;background:#5c5c5c;border:1px solid #404040;border-right:0"></div>
<svg style="left:1705px;top:428px" width="7" height="4" viewBox="0 0 7 4"><path d="M0 0h7L3.500 4z" fill="#c8c8c8"/></svg>
<!-- layer list -->
<div class="a" style="left:1483px;top:446px;width:225px;height:465px;background:#474747"></div>
<div class="a" style="left:1708px;top:446px;width:8px;height:465px;background:#414141"></div>
<div class="a" style="left:1483px;top:446px;width:31px;height:39px;background:#535353"></div>
<div class="a" style="left:1514px;top:446px;width:194px;height:39px;background:#6b7b94"></div>
<div class="a" style="left:1483px;top:485px;width:225px;height:1px;background:#3d3d3d"></div>
<div class="a" style="left:1517px;top:449px;width:24px;height:32px;background:#fff;border:1px solid #111"></div>
<svg style="left:1491px;top:459px" width="14" height="12" viewBox="0 0 14 12"><path d="M0.500 6c3-5.500 10-5.500 13 0-3 5-10 5-13 0z" fill="#e0e0e0"/><circle cx="7" cy="5.800" r="3" fill="#4a4a4a"/><circle cx="7" cy="5.800" r="1.500" fill="#222"/><circle cx="6" cy="4.800" r=".8" fill="#e0e0e0"/></svg>
<div class="t" style="left:1553px;top:459px;color:#fff;font-style:italic;font-size:11px">背景</div>
<svg style="left:1680px;top:458px" width="12" height="14" viewBox="0 0 12 14" fill="none" stroke="#e8e8e8"><rect x="1.500" y="6.500" width="9" height="6.500" stroke-width="1.200"/><path d="M3.500 6.500v-2.500a2.500 2.500 0 015 0v2.500" stroke-width="1.300"/><rect x="5.300" y="8.500" width="1.400" height="2.500" fill="#e8e8e8" stroke="none"/></svg>
<div class="a" style="left:1483px;top:911px;width:233px;height:1px;background:#2e2e2e"></div>
<div class="a" style="left:1483px;top:912px;width:233px;height:20px;background:#535353"></div>
<!-- SECTION: dropdown -->
<div class="a" id="menu">
<div class="i" style="top:6px">新建(N)...</div><div class="k" style="top:6px">Ctrl+N</div>
<div class="i" style="top:27px">打开(O)...</div><div class="k" style="top:27px">Ctrl+O</div>
<div class="i" style="top:48px">在<span class="l"> Bridge </span>中浏览(B)...</div><div class="k" style="top:48px">Alt+Ctrl+O</div>
<div class="i d" style="top:69px">在<span class="l"> Mini Bridge </span>中浏览(G)...</div>
<div class="i" style="top:90px">打开为...</div><div class="k" style="top:90px">Alt+Shift+Ctrl+O</div>
<div class="i" style="top:111px">打开为智能对象...</div>
<div class="i" style="top:133px">最近打开文件(T)</div><div class="r" style="top:134px"></div>
<div class="s" style="top:153px"></div>
<div class="i" style="top:162px">关闭(C)</div><div class="k" style="top:162px">Ctrl+W</div>
<div class="i" style="top:183px">关闭全部</div><div class="k" style="top:183px">Alt+Ctrl+W</div>
<div class="i" style="top:204px">关闭并转到<span class="l"> Bridge</span>...</div><div class="k" style="top:204px">Shift+Ctrl+W</div>
<div class="i d" style="top:225px">存储(S)</div><div class="k d" style="top:225px">Ctrl+S</div>
<div class="i" style="top:246px">存储为(A)...</div><div class="k" style="top:246px">Shift+Ctrl+S</div>
<div class="i d" style="top:267px">签入(I)...</div>
<div class="i" style="top:288px">存储为<span class="l"> Web </span>所用格式...</div><div class="k" style="top:288px">Alt+Shift+Ctrl+S</div>
<div class="i d" style="top:309px">恢复(V)</div><div class="k d" style="top:309px">F12</div>
<div class="s" style="top:330px"></div>
<div class="i" style="top:339px">置入(L)...</div>
<div class="s" style="top:360px"></div>
<div class="i" style="top:370px">导入(M)</div><div class="r" style="top:371px"></div>
<div class="i" style="top:391px">导出(E)</div><div class="r" style="top:392px"></div>
<div class="s" style="top:411px"></div>
<div class="i" style="top:421px">自动(U)</div><div class="r" style="top:422px"></div>
<div class="i" style="top:442px">脚本(R)</div><div class="r" style="top:443px"></div>
<div class="s" style="top:462px"></div>
<div class="i" style="top:471px">文件简介(F)...</div><div class="k" style="top:471px">Alt+Shift+Ctrl+I</div>
<div class="s" style="top:492px"></div>
<div class="i" style="top:501px">打印(P)...</div><div class="k" style="top:501px">Ctrl+P</div>
<div class="i" style="top:522px">打印一份(Y)</div><div class="k" style="top:522px">Alt+Shift+Ctrl+P</div>
<div class="s" style="top:543px"></div>
<div class="i" style="top:552px">退出(X)</div><div class="k" style="top:552px">Ctrl+Q</div>
</div>
<!-- SECTION: overlays -->
<!-- red arrows -->
<svg style="left:0;top:0;filter:drop-shadow(1.500px 1.500px 1.500px rgba(0,0,0,.55))" width="1716" height="936" viewBox="0 0 1716 936">
<path d="M114.700 47L137 60.800 133.300 63.300 201.200 130.700 199.800 132 131.200 65.500 128.200 68.200z" fill="#fb0404"/>
<path d="M509 442.900L487.300 457.700 486.600 453.700 384.900 494.800 384 493.200 485.400 451 483.500 446.200z" fill="#fb0404"/>
</svg>
<!-- activate windows -->
<div class="t" style="left:1427px;top:843px;font-size:20px;line-height:24px;color:#989898;letter-spacing:.55px">激活 Windows</div>
<div class="t" style="left:1427px;top:869px;font-size:15px;line-height:20px;color:#939393;letter-spacing:.45px">转到“设置”以激活 Windows。</div>
<!-- IME bar -->
<div class="a" style="left:1517px;top:912px;width:198px;height:24px;background:#fbfbfb"></div>
<svg style="left:1512px;top:905px" width="36" height="31" viewBox="1512 905 36 31"><path d="M1516.500 913.200L1537.500 908.300q2.500-.5 3 2l4.800 17.500q.5 2.300-2 3L1522 936.500h-1.500l-6.300-20.300q-.5-2.400 2.300-3z" fill="#f2581e"/><path d="M1536.500 914.500c-4.500-2.500-14.500-1.500-14.200 3.200.3 4.600 14.800 2.200 15.200 7.300.3 4.600-10.500 5.500-16 2" stroke="#fff" stroke-width="3.600" fill="none" stroke-linecap="round"/></svg>
<div class="t" style="left:1551px;top:916px;font-size:15px;line-height:16px;font-weight:bold;color:#1766d6">英</div>
<svg style="left:1575px;top:913px" width="141" height="23" viewBox="1575 913 141 23" fill="#1766d6" stroke="none">
 <circle cx="1579.500" cy="922" r="1.500"/><path d="M1585.500 926.300a2 2 0 013.800.5c.3 2-1.300 3.500-3.800 4 1.300-.8 1.800-1.600 1.700-2.500-1-.2-1.700-.9-1.700-2z"/>
 <rect x="1604.300" y="917" width="6" height="10" rx="3"/><path d="M1602 923.500c0 6.500 10.600 6.500 10.600 0" stroke="#1766d6" stroke-width="1.500" fill="none"/><rect x="1606.500" y="928.500" width="1.600" height="3"/><rect x="1604" y="931" width="6.600" height="1.600"/>
 <rect x="1624" y="920" width="15" height="10.500" rx="1.500"/><path d="M1626 922.500h11M1626 925h11" stroke="#fbfbfb" stroke-width="1.100" stroke-dasharray="1.600 1"/><path d="M1628 927.800h7" stroke="#fbfbfb" stroke-width="1.100"/>
 <path d="M1648 921.500l4.500-2.700h1.500c.8 1.300 3.200 1.300 4 0h1.500l4.500 2.700-1.800 3.300-2.200-1v8h-8v-8l-2.200 1z"/>
 <circle cx="1675.500" cy="928" r="2.300" fill="none" stroke="#1766d6" stroke-width="2"/><circle cx="1684" cy="928" r="2.300" fill="none" stroke="#1766d6" stroke-width="2"/><path d="M1677 926l7.500-8M1682.500 926l-7.500-8" stroke="#1766d6" stroke-width="2.300"/>
 <rect x="1697.500" y="920.500" width="5.500" height="4.500" rx=".8"/><rect x="1704.500" y="919.500" width="5.500" height="5.500" rx=".8"/><rect x="1697.500" y="926.500" width="5.500" height="5" rx=".8"/><rect x="1704.500" y="926.500" width="5.500" height="5" rx=".8"/>
</svg>
<!-- watermark logo -->
<svg style="left:1555px;top:884px;opacity:.82" width="50" height="44" viewBox="0 0 50 44" fill="none">
<defs><linearGradient id="lg1" x1="1" y1="0" x2="0" y2="1"><stop offset="0" stop-color="#2f9a4c"/><stop offset=".6" stop-color="#58b84e"/><stop offset="1" stop-color="#e3ec7a"/></linearGradient></defs>
<path d="M45 2C25 4 4 14 3 26c-.5 7 7 9 17 7C10 33 6 29 8 23 11 13 28 5 45 2z" fill="#2a78c8"/>
<path d="M38 9C24 11 10 19 9 26c0 5 7 6 13 3-7 1-10-2-8-6 3-7 14-12 24-14z" fill="#1b5ba8"/>
<path d="M27 18c-6 1-11 4-11 7 0 2 3 3 6 2-3 0-4-1-3-3 1-3 4-5 8-6z" fill="#2a78c8"/>
<path d="M19 21c9-5 21-5 24-2 3 5-7 15-29 21 16-8 24-15 21-18-3-3-10-3-16-1z" fill="url(#lg1)"/>
</svg>
<div class="t" style="left:1600px;top:886px;font-size:21px;line-height:22px;font-weight:bold;color:#1f62ad;opacity:.93">极光下载站</div>
<div class="t" style="left:1601px;top:909px;font-size:18.500px;line-height:20px;color:#46ad52;opacity:.7;letter-spacing:-.95px">www.xz7.com</div>

</body></html>
